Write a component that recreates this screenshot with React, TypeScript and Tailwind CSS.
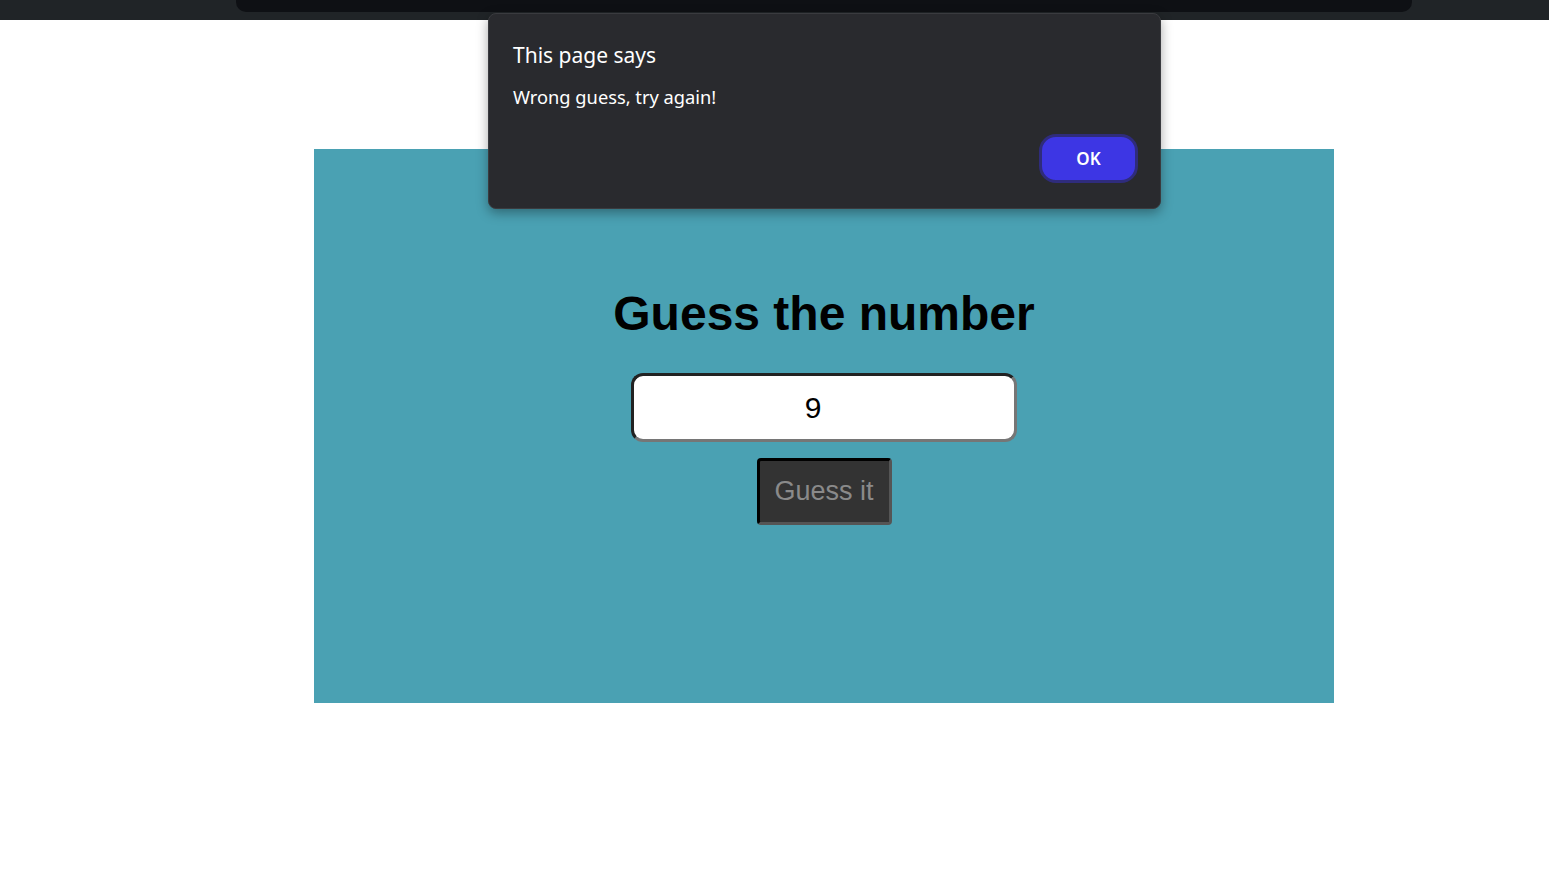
import { useState } from 'react'

export default function App() {
  const [guess, setGuess] = useState('9')

  return (
    <div className="relative min-h-[887px] w-full bg-white font-['Liberation_Sans',Arial,sans-serif]">
      {/* Browser chrome strip */}
      <div className="h-5 w-full bg-[#202427]">
        <div className="ml-[236px] h-3 w-[1176px] rounded-b-[10px] bg-[#0e1014]" />
      </div>

      {/* Game panel */}
      <div className="ml-[314px] mt-[129px] flex h-[554px] w-[1020px] flex-col items-center bg-[#4aa1b3] pt-[135px]">
        <h1 className="text-[48px] font-bold leading-[60px] text-black">Guess the number</h1>
        <input
          type="text"
          value={guess}
          onChange={e => setGuess(e.target.value)}
          className="mt-[29px] h-[69px] w-[386px] rounded-[12px] border-[3px] border-t-[#222] border-l-[#222] border-r-[#767676] border-b-[#767676] bg-white pr-[22px] text-center text-[30px] text-black outline-none"
        />
        <button className="mt-[16px] h-[67px] w-[135px] rounded-[4px] border-[3px] border-t-black border-l-black border-r-[#555] border-b-[#555] bg-[#333] text-[27px] text-[#8a8a8a]">
          Guess it
        </button>
      </div>

      {/* Alert dialog */}
      <div className="absolute left-[488px] top-[13px] h-[196px] w-[673px] rounded-[8px] border border-[#3a3b3f] bg-[#292a2e] px-[22px] pt-[26px] shadow-[0_4px_12px_rgba(0,0,0,0.35)] font-['Noto_Sans','Open_Sans',sans-serif]">
        <div className="pl-[2px] text-[21px] leading-[30px] text-white">This page says</div>
        <div className="mt-[14px] pl-[2px] text-[18.3px] leading-[26px] text-white">Wrong guess, try again!</div>
        <div className="mt-[24px] flex justify-end">
          <button className="flex h-[49px] w-[99px] items-center justify-center rounded-[17px] border-[3px] border-[#2f2c7c] bg-[#3d36e4] text-[17px] font-semibold text-white">
            OK
          </button>
        </div>
      </div>
    </div>
  )
}
